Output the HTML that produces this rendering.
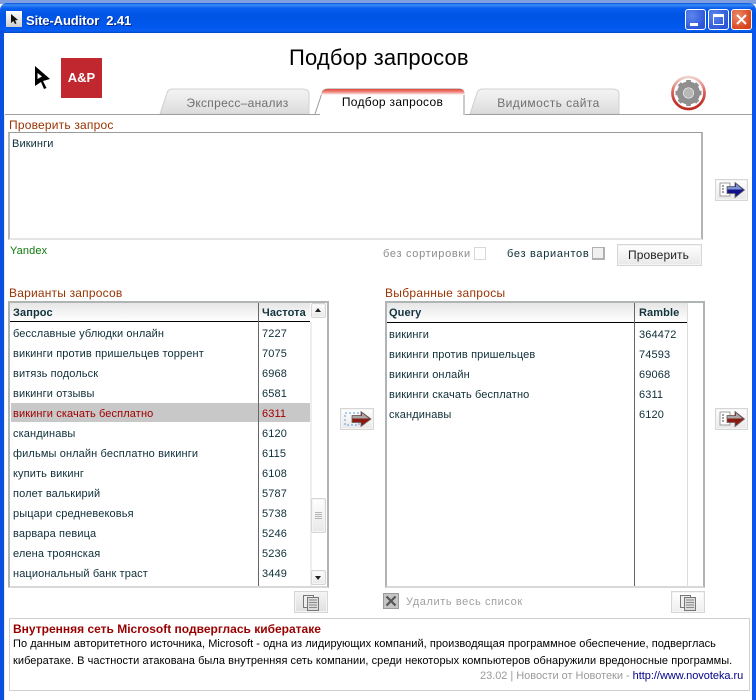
<!DOCTYPE html>
<html><head><meta charset="utf-8"><title>Site-Auditor</title>
<style>
*{box-sizing:border-box}
html,body{margin:0;padding:0;background:#fff}
body{width:756px;height:700px;position:relative;overflow:hidden;font-family:"Liberation Sans",sans-serif;font-size:11px;color:#0e2e38}
.a{position:absolute;white-space:nowrap}
.t{position:absolute;white-space:nowrap;line-height:14px;font-size:11px;letter-spacing:.12px}
.lbl{color:#993300;font-size:12px;line-height:14px;position:absolute;white-space:nowrap;letter-spacing:.2px}
.hd{position:absolute;background:linear-gradient(#e6e6e6,#fff);border-bottom:1px solid #000}
.hdt{position:absolute;font-weight:bold;color:#12343e;font-size:11px;line-height:14px;white-space:nowrap;letter-spacing:.1px}
.btn{position:absolute;border:1px solid #d6d6d6;background:linear-gradient(#fff,#e8e8e8);box-shadow:inset 0 0 0 1px #f4f4f4}
.tab{position:absolute;top:91px;height:25px;color:#6f6f6f;font-size:12px;line-height:25px;text-align:center;letter-spacing:.3px}
.tb{position:absolute;border:2px solid #b0b4b4;border-bottom-color:#d8d8d8;background:#fff}
</style></head><body>

<!-- desktop sliver -->
<div class="a" style="left:0;top:0;width:756px;height:4px;background:#7f9ddf"></div>
<div class="a" style="left:12px;top:-9px;font:bold 11px 'Liberation Sans',sans-serif;color:#e8eefc;letter-spacing:.6px">Extended</div>

<!-- title bar -->
<div class="a" style="left:0;top:3px;width:756px;height:30px;border-radius:7px 7px 0 0;background:linear-gradient(#0a54e0 0,#3b8cf5 2px,#0b5ff0 5px,#0054e3 12px,#0058ee 24px,#0a5ff2 28px,#0046c8 30px)"></div>
<div class="a" style="left:6px;top:11px;width:16px;height:16px;background:linear-gradient(#fff,#cfcfcf)"></div>
<svg class="a" style="left:6px;top:11px" width="16" height="16"><path d="M5 3L5 12L7.400 10L9 13L10.500 12.300L9 9.400L12 9Z" fill="#111"/></svg>
<div class="a" style="left:26px;top:13px;font:bold 13px/15px 'Liberation Sans',sans-serif;color:#fff;letter-spacing:-.1px;text-shadow:1px 1px 0 #0a2a8a">Site-Auditor&nbsp; 2.41</div>

<!-- window buttons -->
<div class="a" style="left:685px;top:9px;width:21px;height:21px;border:1px solid #fff;border-radius:3px;background:radial-gradient(circle at 30% 30%,#5c86ee,#2e55d8 75%)"></div>
<div class="a" style="left:690px;top:23px;width:8px;height:3px;background:#fff"></div>
<div class="a" style="left:708px;top:9px;width:21px;height:21px;border:1px solid #fff;border-radius:3px;background:radial-gradient(circle at 30% 30%,#5c86ee,#2e55d8 75%)"></div>
<div class="a" style="left:713px;top:14px;width:11px;height:11px;border:1px solid #fff;border-top-width:3px"></div>
<div class="a" style="left:731px;top:9px;width:21px;height:21px;border:1px solid #fff;border-radius:3px;background:radial-gradient(circle at 30% 30%,#e98a6a,#d8431c 75%)"></div>
<svg class="a" style="left:731px;top:9px" width="21" height="21"><path d="M6 6L15 15M15 6L6 15" stroke="#fff" stroke-width="2"/></svg>

<!-- window borders -->
<div class="a" style="left:0;top:30px;width:4px;height:670px;background:#0a4fe0"></div>
<div class="a" style="left:752px;top:30px;width:4px;height:670px;background:#0a55ee"></div>

<!-- heading + logo -->
<div class="a" style="left:289px;top:44px;font-size:22px;line-height:28px;color:#000;letter-spacing:.15px">Подбор запросов</div>
<svg class="a" style="left:32px;top:64px" width="20" height="28"><path d="M3 2L18 15L11 17L14.500 24L12 25L9 18L3 22Z" fill="#000"/><path d="M5.500 9L5.500 15L10 12.500Z" fill="#fff"/></svg>
<div class="a" style="left:61px;top:58px;width:41px;height:40px;background:#c1272f;color:#fff;font:bold 13px/40px 'Liberation Sans',sans-serif;text-align:center">A&amp;P</div>

<!-- gear -->
<svg class="a" style="left:670px;top:75px" width="38" height="36" viewBox="0 0 38 36">
<defs><linearGradient id="rg" x1="0" y1="0" x2="0" y2="1"><stop offset="0" stop-color="#f0d4d0"/><stop offset=".45" stop-color="#d9665c"/><stop offset=".8" stop-color="#c4352c"/><stop offset="1" stop-color="#bd2c24"/></linearGradient></defs>
<circle cx="18.500" cy="18" r="16" fill="#fff" stroke="url(#rg)" stroke-width="2.800"/>
<g fill="none" stroke="#8f8f8f"><circle cx="18.500" cy="18" r="8.500" stroke-width="6"/>
<path d="M18.500 5V31M5.500 18H31.500M9.300 8.800L27.700 27.200M27.700 8.800L9.300 27.200" stroke-width="4.600" stroke-dasharray="3.600 18.800"/></g>
<circle cx="18.500" cy="18" r="5" fill="#b8b8b8"/>
</svg>

<!-- tabs -->
<svg class="a" style="left:155px;top:88px" width="470" height="28">
<defs><linearGradient id="g" x1="0" y1="0" x2="0" y2="1"><stop offset="0" stop-color="#f4f4f4"/><stop offset="1" stop-color="#dcdcdc"/></linearGradient>
<linearGradient id="r" x1="0" y1="0" x2="0" y2="1"><stop offset="0" stop-color="#e2463c"/><stop offset=".5" stop-color="#ee8a80"/><stop offset="1" stop-color="#ffffff"/></linearGradient></defs>
<path d="M5 26L12 5Q13 1 18 1H147Q154 1 154 6V26Z" fill="url(#g)" stroke="#d0d0d0"/>
<path d="M315 26L322 5Q323 1 328 1H457Q464 1 464 6V26Z" fill="url(#g)" stroke="#d0d0d0"/>
<path d="M160 26L167 5Q168 1 173 1H304Q309 1 309 6V27" fill="#fff" stroke="#9a9a9a"/>
<path d="M166 7L167 4Q168 1 173 1H304Q309 1 309.500 5V7Z" fill="url(#r)"/>
</svg>
<div class="a" style="left:5px;top:114px;width:315px;height:1px;background:#a0a0a0"></div>
<div class="a" style="left:465px;top:114px;width:287px;height:1px;background:#a0a0a0"></div>
<div class="a" style="left:4px;top:114px;width:1px;height:586px;background:#e6e6e6"></div>
<div class="tab" style="left:170px;width:135px">Экспресс–анализ</div>
<div class="tab" style="left:325px;width:135px;top:90px;color:#000">Подбор запросов</div>
<div class="tab" style="left:481px;width:135px;letter-spacing:.45px">Видимость сайта</div>

<!-- query box -->
<div class="lbl" style="left:9px;top:118px">Проверить запрос</div>
<div class="a" style="left:8px;top:132px;width:695px;height:108px;border:1px solid #9a9a9a;border-right:2px solid #b4b4b4;border-bottom:2px solid #e4e4e4;border-left:2px solid #b8b8b8;background:#fff"></div>
<div class="t" style="left:12px;top:137px">Викинги</div>
<div class="t" style="left:10px;top:244px;color:#0a7a0a">Yandex</div>

<div class="t" style="left:383px;top:247px;color:#8c8c8c;letter-spacing:.7px">без сортировки</div>
<div class="a" style="left:474px;top:247px;width:12px;height:13px;border:1px solid #d8d8d8;background:#fff"></div>
<div class="t" style="left:507px;top:247px;letter-spacing:.7px">без вариантов</div>
<div class="a" style="left:592px;top:247px;width:13px;height:13px;border:1px solid #b0b0b0;border-right-width:2px;border-bottom-width:2px;background:#f0f0f0"></div>
<div class="btn" style="left:617px;top:244px;width:85px;height:22px"></div>
<div class="t" style="left:616px;top:248px;width:85px;text-align:center;color:#222;font-size:12px">Проверить</div>

<!-- arrow buttons -->
<div class="btn" style="left:715px;top:179px;width:33px;height:22px"></div>
<svg class="a" style="left:715px;top:179px" width="33" height="22"><rect x="5" y="4" width="10" height="13" fill="#fff" stroke="#888" stroke-width=".8"/><path d="M7 7h2M7 10h2M7 13h2" stroke="#444"/><path d="M12 7.500H20V3.500L29.500 11L20 18.500V14.500H12Z" fill="#12128c" stroke="#666" stroke-width=".8"/><path d="M12.500 8H21V5L27.500 10.500H12.500Z" fill="#7d95d4"/></svg>
<div class="btn" style="left:715px;top:408px;width:33px;height:22px"></div>
<svg class="a" style="left:715px;top:408px" width="33" height="22"><rect x="5" y="4" width="10" height="13" fill="#fff" stroke="#888" stroke-width=".8"/><path d="M7 7h2M7 10h2M7 13h2" stroke="#444"/><path d="M12 7.500H20V3.500L29.500 11L20 18.500V14.500H12Z" fill="#8c1a12" stroke="#666" stroke-width=".8"/><path d="M12.500 8H21V5L27.500 10.500H12.500Z" fill="#a8a8a8"/></svg>
<div class="btn" style="left:340px;top:408px;width:34px;height:22px"></div>
<svg class="a" style="left:340px;top:408px" width="34" height="22"><rect x="5" y="5" width="14" height="12" fill="none" stroke="#5a9ae8" stroke-dasharray="2 2"/><path d="M12 7.500H21V3.500L31 11L21 18.500V14.500H12Z" fill="#8c1a12" stroke="#666" stroke-width=".8"/><path d="M12.500 8H22V5L29 10.500H12.500Z" fill="#a8a8a8"/></svg>

<!-- left table -->
<div class="lbl" style="left:9px;top:286px">Варианты запросов</div>
<div class="tb" style="left:8px;top:301px;width:321px;height:287px"></div>
<div class="hd" style="left:10px;top:303px;width:300px;height:19px"></div>
<div class="a" style="left:258px;top:303px;width:1px;height:283px;background:#666"></div>
<div class="a" style="left:310px;top:322px;width:2px;height:264px;background:#eee"></div>
<div class="hdt" style="left:13px;top:306px">Запрос</div>
<div class="hdt" style="left:262px;top:306px">Частота</div>
<div class="a" style="left:11px;top:403px;width:299px;height:19px;background:#c8c8c8"></div>
<div class="a" style="left:258px;top:403px;width:1px;height:19px;background:#666"></div>
<div class="t" style="left:13px;top:327px">бесславные ублюдки онлайн</div><div class="t" style="left:262px;top:327px">7227</div>
<div class="t" style="left:13px;top:347px">викинги против пришельцев торрент</div><div class="t" style="left:262px;top:347px">7075</div>
<div class="t" style="left:13px;top:367px">витязь подольск</div><div class="t" style="left:262px;top:367px">6968</div>
<div class="t" style="left:13px;top:387px">викинги отзывы</div><div class="t" style="left:262px;top:387px">6581</div>
<div class="t" style="left:13px;top:407px;color:#a00000">викинги скачать бесплатно</div><div class="t" style="left:262px;top:407px;color:#a00000">6311</div>
<div class="t" style="left:13px;top:427px">скандинавы</div><div class="t" style="left:262px;top:427px">6120</div>
<div class="t" style="left:13px;top:447px">фильмы онлайн бесплатно викинги</div><div class="t" style="left:262px;top:447px">6115</div>
<div class="t" style="left:13px;top:467px">купить викинг</div><div class="t" style="left:262px;top:467px">6108</div>
<div class="t" style="left:13px;top:487px">полет валькирий</div><div class="t" style="left:262px;top:487px">5787</div>
<div class="t" style="left:13px;top:507px">рыцари средневековья</div><div class="t" style="left:262px;top:507px">5738</div>
<div class="t" style="left:13px;top:527px">варвара певица</div><div class="t" style="left:262px;top:527px">5246</div>
<div class="t" style="left:13px;top:547px">елена троянская</div><div class="t" style="left:262px;top:547px">5236</div>
<div class="t" style="left:13px;top:567px">национальный банк траст</div><div class="t" style="left:262px;top:567px">3449</div>
<!-- scrollbar -->
<div class="btn" style="left:311px;top:303px;width:15px;height:15px;border-radius:2px"></div>
<div class="a" style="left:315px;top:308px;width:0;height:0;border-left:3.500px solid transparent;border-right:3.500px solid transparent;border-bottom:4px solid #222"></div>
<div class="btn" style="left:311px;top:498px;width:15px;height:35px;border-radius:2px"></div>
<div class="a" style="left:315px;top:512px;width:7px;height:7px;background:repeating-linear-gradient(#b4b4b4 0 1px,transparent 1px 2px)"></div>
<div class="btn" style="left:311px;top:570px;width:15px;height:15px;border-radius:2px"></div>
<div class="a" style="left:315px;top:576px;width:0;height:0;border-left:3.500px solid transparent;border-right:3.500px solid transparent;border-top:4px solid #222"></div>

<!-- right table -->
<div class="lbl" style="left:385px;top:286px;letter-spacing:.3px">Выбранные запросы</div>
<div class="tb" style="left:385px;top:301px;width:320px;height:287px"></div>
<div class="hd" style="left:387px;top:303px;width:300px;height:20px"></div>
<div class="a" style="left:634px;top:303px;width:1px;height:283px;background:#666"></div>
<div class="a" style="left:687px;top:303px;width:1px;height:283px;background:#dcdcdc"></div>
<div class="hdt" style="left:389px;top:306px">Query</div>
<div class="hdt" style="left:639px;top:306px">Ramble</div>
<div class="t" style="left:389px;top:328px">викинги</div><div class="t" style="left:639px;top:328px">364472</div>
<div class="t" style="left:389px;top:348px">викинги против пришельцев</div><div class="t" style="left:639px;top:348px">74593</div>
<div class="t" style="left:389px;top:368px">викинги онлайн</div><div class="t" style="left:639px;top:368px">69068</div>
<div class="t" style="left:389px;top:388px">викинги скачать бесплатно</div><div class="t" style="left:639px;top:388px">6311</div>
<div class="t" style="left:389px;top:408px">скандинавы</div><div class="t" style="left:639px;top:408px">6120</div>

<!-- copy buttons -->
<div class="btn" style="left:294px;top:591px;width:34px;height:22px;background:linear-gradient(#f4f4f4,#e0e0e0)"></div>
<svg class="a" style="left:294px;top:591px" width="34" height="22"><rect x="9.500" y="4.500" width="10" height="12" fill="#eee" stroke="#777"/><rect x="13.500" y="6.500" width="11" height="13" fill="#ddd" stroke="#777"/><path d="M15 9h8M15 11.500h8M15 14h8M15 16.500h8" stroke="#888"/></svg>
<div class="btn" style="left:671px;top:591px;width:34px;height:22px;background:linear-gradient(#fff,#eee)"></div>
<svg class="a" style="left:671px;top:591px" width="34" height="22"><rect x="9.500" y="4.500" width="10" height="12" fill="#eee" stroke="#777"/><rect x="13.500" y="6.500" width="11" height="13" fill="#ddd" stroke="#777"/><path d="M15 9h8M15 11.500h8M15 14h8M15 16.500h8" stroke="#888"/></svg>
<div class="a" style="left:383px;top:593px;width:16px;height:16px;background:#c4c4c4;border:1px solid #9a9a9a"></div>
<svg class="a" style="left:383px;top:593px" width="16" height="16"><path d="M3.500 3.500L12.500 12.500M12.500 3.500L3.500 12.500" stroke="#555" stroke-width="2.200"/></svg>
<div class="t" style="left:406px;top:595px;color:#a0a0a0;letter-spacing:.6px">Удалить весь список</div>

<!-- news -->
<div class="a" style="left:9px;top:618px;width:741px;height:73px;border:1px solid #d0d0d0;background:#fff"></div>
<div class="a" style="left:13px;top:622px;font:bold 12px/14px 'Liberation Sans',sans-serif;color:#990000">Внутренняя сеть Microsoft подверглась кибератаке</div>
<div class="t" style="left:13px;top:637px;color:#000;letter-spacing:.04px">По данным авторитетного источника, Microsoft - одна из лидирующих компаний, производящая программное обеспечение, подверглась</div>
<div class="t" style="left:13px;top:654px;color:#000;letter-spacing:.055px">кибератаке. В частности атакована была внутренняя сеть компании, среди некоторых компьютеров обнаружили вредоносные программы.</div>
<div class="t" style="left:480px;top:669px;color:#9a9a9a;letter-spacing:-.03px">23.02 | Новости от Новотеки - <span style="color:#00008b">http://www.novoteka.ru</span></div>

</body></html>
